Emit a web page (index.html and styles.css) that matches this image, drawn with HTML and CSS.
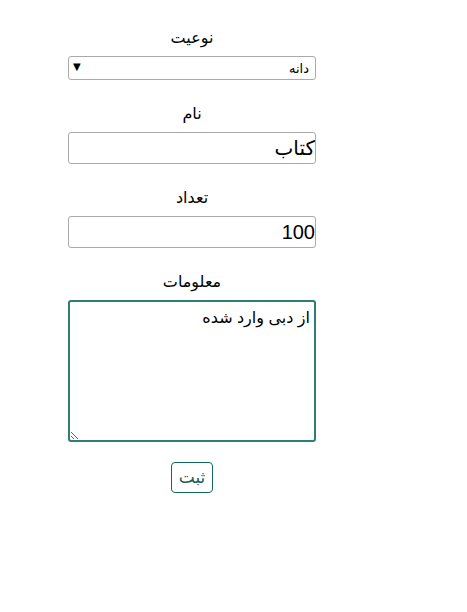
FILE: index.html
```html
<!DOCTYPE html>
<html lang="fa" dir="rtl">
<head>
    <meta charset="UTF-8">
    <meta name="viewport" content="width=device-width, initial-scale=1.0">
    <title>ثبت جنس</title>
    <link rel="stylesheet" href="styles.css">
</head>
<body>
    <form class="item-form">
        <div class="field">
            <label for="type">نوعیت</label>
            <div class="select-wrap">
                <select id="type">
                    <option>دانه</option>
                    <option>کارتن</option>
                </select>
                <span class="select-arrow">▼</span>
            </div>
        </div>

        <div class="field">
            <label for="name">نام</label>
            <input id="name" type="text" value="کتاب">
        </div>

        <div class="field">
            <label for="count">تعداد</label>
            <input id="count" type="text" value="100">
        </div>

        <div class="field last">
            <label for="info">معلومات</label>
            <textarea id="info">از دبی وارد شده</textarea>
        </div>

        <button type="button" class="submit-btn">ثبت</button>
    </form>
</body>
</html>
```

FILE: styles.css
```css
body {
    margin: 8px;
    font-family: 'Liberation Sans', 'DejaVu Sans', sans-serif;
    color: #000;
    background: #fff;
}

.item-form {
    width: 368px;
    margin-right: auto;
    display: flex;
    flex-direction: column;
    align-items: center;
    padding-top: 20px;
}

.field {
    display: flex;
    flex-direction: column;
    align-items: center;
    margin-bottom: 24px;
}

.field.last {
    margin-bottom: 20px;
}

.field label {
    font-size: 16px;
    line-height: 20px;
    margin-bottom: 8px;
}

.select-wrap {
    position: relative;
    width: 248px;
}

.select-wrap select {
    appearance: none;
    width: 248px;
    height: 24px;
    border: 1px solid #a9a9a9;
    border-radius: 3px;
    background: #fff;
    font-family: inherit;
    font-size: 13px;
    padding: 0 6px;
    color: #000;
}

.select-arrow {
    position: absolute;
    left: 5px;
    top: 5px;
    font-family: 'DejaVu Sans', sans-serif;
    font-size: 10px;
    pointer-events: none;
}

.field input {
    width: 248px;
    height: 32px;
    box-sizing: border-box;
    border: 1px solid #a9a9a9;
    border-radius: 3px;
    padding: 0;
    font-family: inherit;
    font-size: 20px;
    direction: rtl;
}

.field textarea {
    width: 248px;
    height: 142px;
    box-sizing: border-box;
    border: 2px solid #2f7d73;
    border-radius: 3px;
    padding: 6px 4px;
    font-family: inherit;
    font-size: 16px;
    outline: none;
    resize: both;
}

.submit-btn {
    width: 42px;
    height: 31px;
    border: 1px solid #11695e;
    border-radius: 4px;
    background: #fff;
    color: #1b5e52;
    font-family: inherit;
    font-size: 17px;
    padding: 0;
}
```
